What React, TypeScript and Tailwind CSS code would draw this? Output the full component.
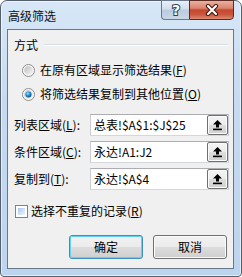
import React from "react";

function Radio({ checked, id }: { checked?: boolean; id: string }) {
  return (
    <svg width="13" height="13" viewBox="0 0 13 13" className="shrink-0">
      <defs>
        <linearGradient id={`rg${id}`} x1="0" y1="0" x2="1" y2="1">
          <stop offset="0" stopColor="#bdbdbd" />
          <stop offset="1" stopColor="#f7f7f7" />
        </linearGradient>
        <radialGradient id={`dot${id}`} cx="0.4" cy="0.35" r="0.75">
          <stop offset="0" stopColor="#a8e8ff" />
          <stop offset="0.45" stopColor="#1f8fd6" />
          <stop offset="1" stopColor="#0b3c78" />
        </radialGradient>
      </defs>
      <circle cx="6.5" cy="6.5" r="6" fill="#fdfdfd" stroke="#8c8c8c" />
      <circle cx="6.5" cy="6.5" r="4.4" fill={`url(#rg${id})`} />
      {checked && <circle cx="6.5" cy="6.5" r="3" fill={`url(#dot${id})`} />}
    </svg>
  );
}

function UpButton() {
  return (
    <div className="ml-auto h-[20px] w-[21px] shrink-0 rounded-[2px] border border-[#707070] bg-[linear-gradient(to_bottom,#f4f4f4_0%,#ececec_50%,#dedede_50%,#d0d0d0_100%)] shadow-[inset_0_0_0_1px_#fbfbfb] flex items-center justify-center">
      <svg width="11" height="12" viewBox="0 0 11 12">
        <path d="M5.5 1 L10 5.5 H7 V8.5 H4 V5.5 H1 Z" fill="#000" />
        <rect x="1" y="9.6" width="9" height="1.6" fill="#000" />
      </svg>
    </div>
  );
}

function Field({ label, k, value }: { label: string; k: string; value: string }) {
  return (
    <div className="flex items-center h-[22px]">
      <div className="w-[76px] leading-[16px]">
        {label}(<span className="underline underline-offset-[1px]">{k}</span>):
      </div>
      <div className="w-[139px] h-[22px] bg-white border border-[#abadb3] border-l-[#c9ccd3] border-r-[#c9ccd3] border-b-[#d4d8de] flex items-center">
        <span className="pl-[3px] leading-[16px]">{value}</span>
        <UpButton />
      </div>
    </div>
  );
}

export default function App() {
  return (
    <div className="w-[242px] h-[277px] overflow-hidden bg-white font-['Microsoft_YaHei','Noto_Sans_CJK_SC',sans-serif] text-[12px] text-black">
      <div className="w-[242px] h-[277px] rounded-t-[7px] rounded-b-[4px] border border-[#56606c] bg-[linear-gradient(to_bottom,#d7e7f7_0%,#c6dbf1_35%,#bdd4ee_100%)] shadow-[inset_0_0_0_1px_rgba(255,255,255,0.55)] flex flex-col">
        {/* title bar */}
        <div className="h-[28px] flex items-start justify-between shrink-0">
          <div className="pl-[7px] pt-[7px] leading-[16px] text-[#111]">高级筛选</div>
          <div className="flex mr-[7px] -mt-[1px]">
            <div className="w-[28px] h-[20px] rounded-bl-[4px] border border-[#6a7a8e] border-r-0 bg-[linear-gradient(to_bottom,#e9f0f7_0%,#d3dfec_45%,#bccbdd_50%,#c9d7e6_100%)] flex items-center justify-center">
              <svg width="14" height="16" viewBox="0 0 14 16">
                <text x="7" y="13" textAnchor="middle" fontFamily="DejaVu Sans, sans-serif" fontWeight="bold" fontSize="14" fill="#fff" stroke="#33404f" strokeWidth="2" paintOrder="stroke">?</text>
              </svg>
            </div>
            <div className="w-[45px] h-[20px] rounded-br-[4px] border border-[#5a2b22] bg-[linear-gradient(to_bottom,#eab0a0_0%,#d98470_40%,#c4472f_50%,#c9563d_75%,#dc8a72_100%)] flex items-center justify-center">
              <svg width="14" height="12" viewBox="0 0 14 12">
                <path d="M3 2 L11 10 M11 2 L3 10" stroke="#3b1510" strokeWidth="4.2" strokeLinecap="round" />
                <path d="M3 2 L11 10 M11 2 L3 10" stroke="#ffffff" strokeWidth="2.2" strokeLinecap="round" />
              </svg>
            </div>
          </div>
        </div>

        {/* client area */}
        <div className="ml-[6px] mr-[7px] mb-[7px] flex-1 border border-[#687888] bg-[#f0f0f0] flex flex-col">
          {/* group header */}
          <div className="mt-[7px] h-[16px] flex items-center pl-[6px] pr-[5px]">
            <span className="leading-[16px]">方式</span>
            <div className="ml-[6px] flex-1 border-t border-t-[#d5dfe5] border-b border-b-white" />
          </div>

          {/* radios */}
          <div className="mt-[5px] h-[24px] flex items-center pl-[14px] gap-[5px]">
            <Radio id="a" />
            <span className="leading-[16px]">
              在原有区域显示筛选结果(<span className="underline underline-offset-[1px]">F</span>)
            </span>
          </div>
          <div className="h-[24px] flex items-center pl-[14px] gap-[5px]">
            <Radio id="b" checked />
            <span className="leading-[16px]">
              将筛选结果复制到其他位置(<span className="underline underline-offset-[1px]">O</span>)
            </span>
          </div>

          {/* fields */}
          <div className="mt-[8px] pl-[6px] flex flex-col gap-[5px]">
            <Field label="列表区域" k="L" value="总表!$A$1:$J$25" />
            <Field label="条件区域" k="C" value="永达!A1:J2" />
            <Field label="复制到" k="T" value="永达!$A$4" />
          </div>

          {/* checkbox */}
          <div className="mt-[13px] h-[16px] flex items-center pl-[7px]">
            <div className="w-[13px] h-[13px] border border-[#5f88bb] bg-white p-[2px] shrink-0">
              <div className="w-full h-full bg-[linear-gradient(135deg,#a9c6e8_0%,#d3e4f6_60%,#ecf4fc_100%)]" />
            </div>
            <span className="ml-[3px] leading-[16px]">
              选择不重复的记录(<span className="underline underline-offset-[1px]">R</span>)
            </span>
          </div>

          {/* buttons */}
          <div className="mt-[16px] flex justify-end gap-[10px] pr-[6px]">
            <div className="w-[74px] h-[24px] rounded-[3px] border border-[#3c8fc4] bg-[linear-gradient(to_bottom,#f2f2f2_0%,#ebebeb_50%,#dddddd_50%,#cfcfcf_100%)] shadow-[inset_0_0_0_1px_#5fd2f5] flex items-center justify-center leading-[16px]">
              确定
            </div>
            <div className="w-[74px] h-[24px] rounded-[3px] border border-[#707070] bg-[linear-gradient(to_bottom,#f2f2f2_0%,#ebebeb_50%,#dddddd_50%,#cfcfcf_100%)] shadow-[inset_0_0_0_1px_#fbfbfb] flex items-center justify-center leading-[16px]">
              取消
            </div>
          </div>
        </div>
      </div>
    </div>
  );
}
